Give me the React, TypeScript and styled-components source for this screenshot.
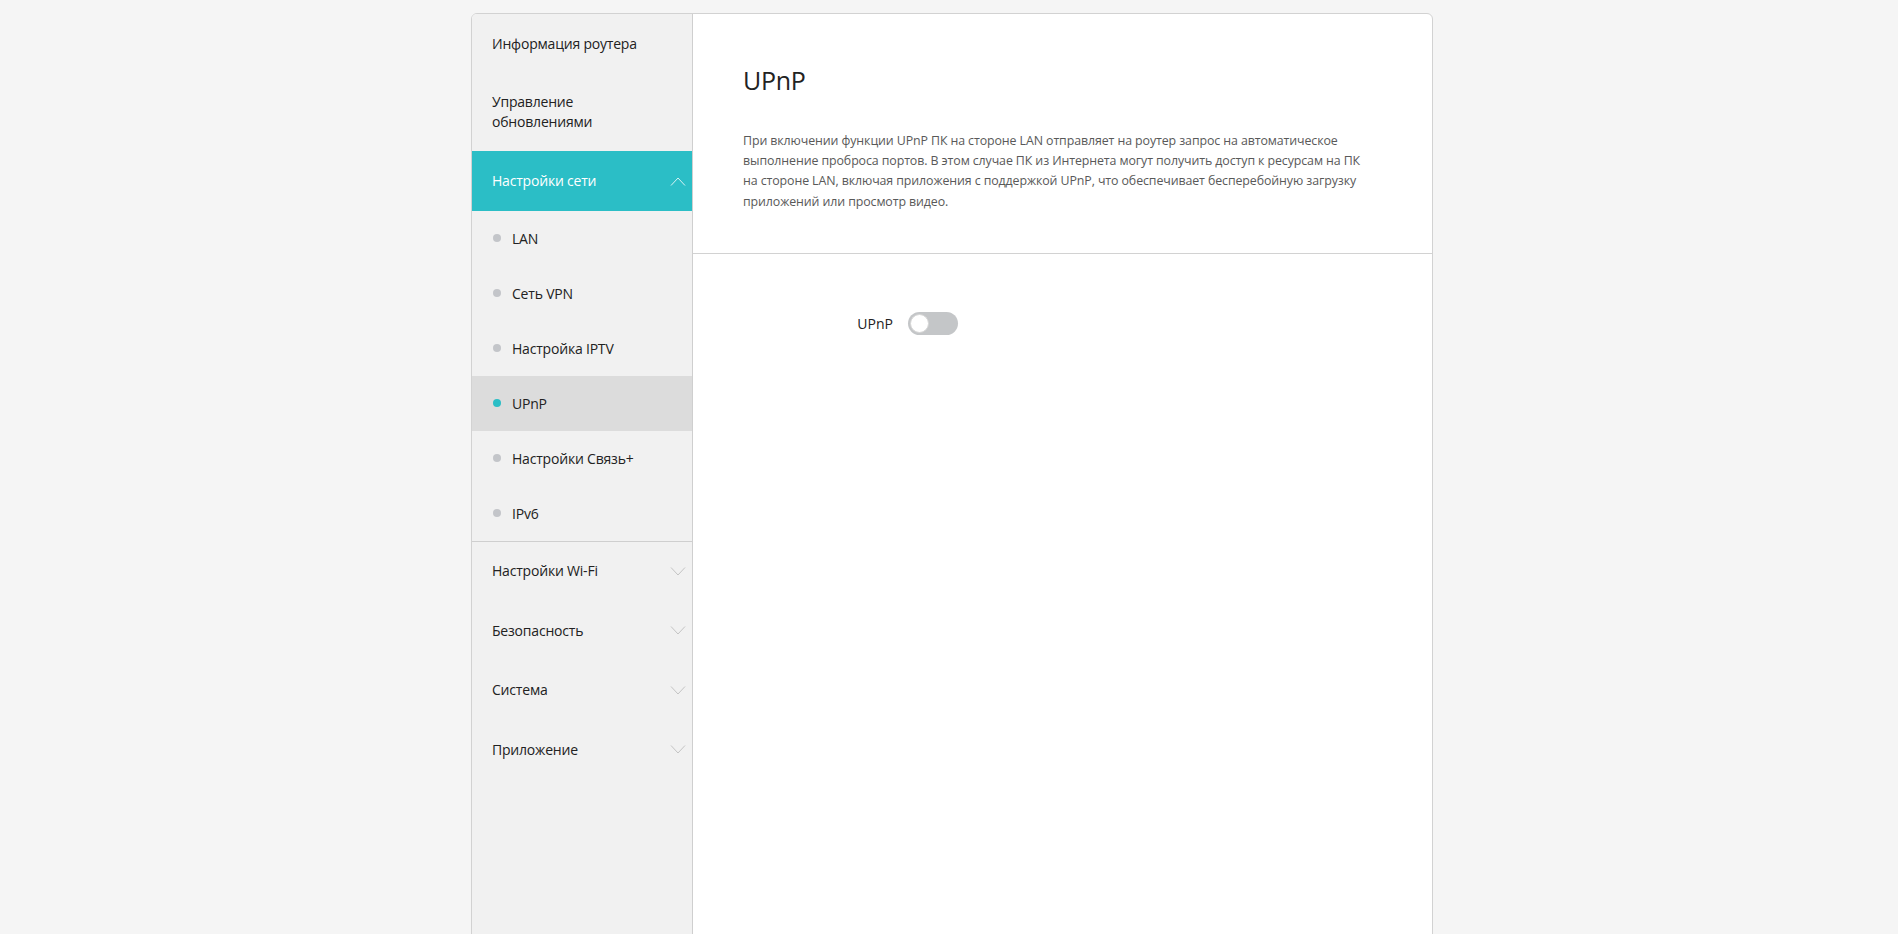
import React, { useState } from 'react'
import styled, { createGlobalStyle } from 'styled-components'

const GlobalStyle = createGlobalStyle`
  html, body {
    margin: 0;
    padding: 0;
    background: #f5f5f5;
  }
  body {
    font-family: 'Open Sans', 'Noto Sans', Arial, sans-serif;
    color: #222;
  }
`

const Page = styled.div`
  padding: 13px 0 0 6px;
`

const Card = styled.div`
  width: 962px;
  min-height: 1000px;
  margin: 0 auto;
  box-sizing: border-box;
  display: flex;
  background: #fff;
  border: 1px solid #d2d2d2;
  border-radius: 6px;
  overflow: hidden;
`

const Sidebar = styled.nav`
  width: 221px;
  flex-shrink: 0;
  box-sizing: border-box;
  background: #f1f1f1;
  border-right: 1px solid #cfcfcf;
`

const TopItem = styled.div<{ $active?: boolean; $tall?: boolean }>`
  display: flex;
  align-items: center;
  justify-content: space-between;
  box-sizing: border-box;
  min-height: 59.4px;
  padding: ${p => (p.$tall ? '19px' : '0')} 6px ${p => (p.$tall ? '19px' : '0')} 20px;
  font-size: 14px;
  line-height: 20px;
  letter-spacing: -0.2px;
  color: ${p => (p.$active ? '#fff' : '#222')};
  background: ${p => (p.$active ? '#2bbec6' : 'transparent')};
  cursor: pointer;
`

const SubList = styled.div`
  border-bottom: 1px solid #cfcfcf;
`

const SubItem = styled.div<{ $selected?: boolean }>`
  display: flex;
  align-items: center;
  gap: 11px;
  height: 55px;
  padding-left: 21px;
  font-size: 14px;
  letter-spacing: -0.2px;
  color: #222;
  background: ${p => (p.$selected ? '#dcdcdc' : 'transparent')};
  cursor: pointer;
`

const Dot = styled.span<{ $selected?: boolean }>`
  width: 8px;
  height: 8px;
  border-radius: 50%;
  background: ${p => (p.$selected ? '#2bbec6' : '#c3c5c9')};
`

const Main = styled.main`
  flex: 1;
  display: flex;
  flex-direction: column;
`

const Header = styled.section`
  padding: 49px 36px 41px 50px;
  border-bottom: 1px solid #d2d2d2;
`

const Title = styled.h1`
  margin: 0;
  font-size: 25px;
  line-height: 34px;
  font-weight: 400;
  letter-spacing: -0.3px;
  color: #222;
`

const Description = styled.p`
  margin: 34px 0 0;
  max-width: 660px;
  font-size: 12.4px;
  line-height: 20.2px;
  color: #595959;
  letter-spacing: -0.1px;
`

const Form = styled.div`
  padding-top: 58px;
`

const FieldRow = styled.div`
  display: grid;
  grid-template-columns: 215px auto;
  align-items: center;
`

const FieldLabel = styled.label`
  text-align: right;
  padding-right: 15px;
  font-size: 14px;
  color: #222;
`

const Switch = styled.button<{ $on: boolean }>`
  position: relative;
  width: 50px;
  height: 23px;
  padding: 0;
  border: 0;
  border-radius: 12px;
  background: ${p => (p.$on ? '#2bbec6' : '#c4c6c8')};
  cursor: pointer;

  &::after {
    content: '';
    position: absolute;
    top: 2px;
    left: ${p => (p.$on ? '29px' : '2px')};
    width: 19px;
    height: 19px;
    box-sizing: border-box;
    border-radius: 50%;
    background: #fff;
    border: 1px solid #d6d6d6;
    transition: left 0.2s;
  }
`

const Chevron = ({ up, color }: { up?: boolean; color: string }) => (
  <svg width="16" height="9" viewBox="0 0 16 9" fill="none">
    <path
      d={up ? 'M1 8.5 L8 1 L15 8.5' : 'M1 0.5 L8 8 L15 0.5'}
      stroke={color}
      strokeWidth="1"
    />
  </svg>
)

const subItems = ['LAN', 'Сеть VPN', 'Настройка IPTV', 'UPnP', 'Настройки Связь+', 'IPv6']
const collapsed = ['Настройки Wi-Fi', 'Безопасность', 'Система', 'Приложение']

export default function App() {
  const [enabled, setEnabled] = useState(false)

  return (
    <>
      <GlobalStyle />
      <Page>
        <Card>
          <Sidebar>
            <TopItem>Информация роутера</TopItem>
            <TopItem $tall>
              Управление
              <br />
              обновлениями
            </TopItem>
            <TopItem $active>
              Настройки сети
              <Chevron up color="#d8f3f4" />
            </TopItem>
            <SubList>
              {subItems.map(name => (
                <SubItem key={name} $selected={name === 'UPnP'}>
                  <Dot $selected={name === 'UPnP'} />
                  {name}
                </SubItem>
              ))}
            </SubList>
            {collapsed.map(name => (
              <TopItem key={name}>
                {name}
                <Chevron color="#c4c4c4" />
              </TopItem>
            ))}
          </Sidebar>
          <Main>
            <Header>
              <Title>UPnP</Title>
              <Description>
                При включении функции UPnP ПК на стороне LAN отправляет на роутер запрос на автоматическое
                <br />
                выполнение проброса портов. В этом случае ПК из Интернета могут получить доступ к ресурсам на ПК
                <br />
                на стороне LAN, включая приложения с поддержкой UPnP, что обеспечивает бесперебойную загрузку
                <br />
                приложений или просмотр видео.
              </Description>
            </Header>
            <Form>
              <FieldRow>
                <FieldLabel>UPnP</FieldLabel>
                <Switch $on={enabled} onClick={() => setEnabled(v => !v)} aria-label="UPnP" />
              </FieldRow>
            </Form>
          </Main>
        </Card>
      </Page>
    </>
  )
}
